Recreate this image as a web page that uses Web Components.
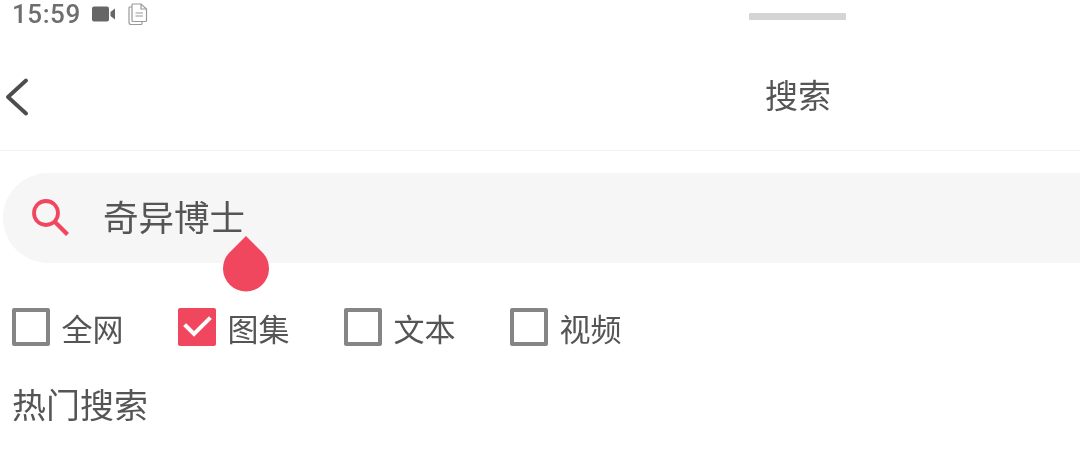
<!DOCTYPE html>
<html lang="zh-CN"><head><meta charset="utf-8"><title>搜索</title>
<style>
html,body{margin:0;padding:0;width:1080px;height:449px;overflow:hidden;background:#fff}
</style></head><body>
<search-app></search-app>
<script>
const F='"Noto Sans CJK SC","Noto Sans",sans-serif';
function def(name,css,html){
  customElements.define(name,class extends HTMLElement{
    constructor(){super();this.attachShadow({mode:'open'}).innerHTML='<style>'+css+'</style>'+html;}
  });
}
def('status-bar',`
:host{display:grid;grid-template-columns:1fr auto 234px;align-items:start;height:41px;color:#6e6e6e}
.l{display:flex;align-items:center;gap:11px;padding-left:12px;height:28px}
time{font:500 26px/26px Roboto,sans-serif;letter-spacing:.55px;margin-top:1px;margin-bottom:1px}
.h{width:97px;height:7px;margin-top:13px;background:#d4d4d4;border-radius:1px}
svg{display:block}`,`
<div class="l"><time>15:59</time>
<svg width="24" height="16" viewBox="0 0 24 16"><rect x="0" y="0.5" width="17" height="15" rx="2" fill="#666"/><path d="M18.500 6 L23 2.500 V13.500 L18.500 10Z" fill="#666"/></svg>
<svg style="margin-left:1px" width="20" height="22" viewBox="0 0 20 22" fill="none" stroke="#9a9a9a" stroke-width="1.200"><path d="M5 1h8l5.500 5v11.500a1 1 0 0 1-1 1H5a1 1 0 0 1-1-1V2a1 1 0 0 1 1-1z" fill="#fff"/><path d="M13 1v5h5.500"/><path d="M7.500 10h7.500M7.500 13h7.500"/><path d="M4 4H2a1 1 0 0 0-1 1v14.500a2 2 0 0 0 2 2h10a1 1 0 0 0 1-1v-2"/></svg></div>
<div class="h"></div><div></div>`);
def('app-header',`
:host{display:grid;grid-template-columns:1fr auto 249px;align-items:center;height:110px;padding-top:2px;box-sizing:border-box;border-bottom:1px solid #f1f1f1;color:#555;font:400 33px/1 ${F}}
svg{display:block;margin-left:5px}
span{padding-bottom:4px}`,`
<svg width="24" height="38" viewBox="0 0 24 38" fill="none" stroke="#4d4d4d" stroke-width="3.800" stroke-linecap="round" stroke-linejoin="round"><path d="M21 2.500 L3 19 L21 35.500"/></svg>
<span><slot></slot></span><div></div>`);
def('search-box',`
:host{display:flex;align-items:center;position:relative;height:90px;margin:22px 0 0 3px;padding-left:29px;background:#f6f6f6;border-radius:45px 0 0 45px;color:#555;font:400 35.500px/1 ${F}}
svg.i{display:block;flex:none}
span{margin-left:33px;padding-bottom:5px}
svg.d{position:absolute;left:219px;top:63px}`,`
<svg class="i" width="38" height="38" viewBox="0 0 38 38" fill="none" stroke="#f0475f" stroke-width="3.800"><circle cx="14" cy="14" r="12"/><path d="M22.500 22.500 L35.500 35.500" stroke-width="4.200"/></svg>
<span><slot></slot></span>
<svg class="d" width="48" height="56" viewBox="0 0 48 56"><path d="M24 0 L7 17 A23 23 0 1 0 41 17Z" fill="#f0475f"/></svg>`);
def('check-item',`
:host{display:flex;align-items:center;width:166px;color:#555;font:400 31px/1 ${F}}
.b{box-sizing:border-box;width:38px;height:38px;border:4px solid #858585;border-radius:2px;margin-right:11.500px;flex:none}
:host([checked]) .b{background:#f0475f;border:0;display:flex;align-items:center;justify-content:center}
svg{display:none}
:host([checked]) svg{display:block}`,`
<div class="b"><svg width="32" height="26" viewBox="0 0 32 26" fill="none" stroke="#fff" stroke-width="4" stroke-linecap="square"><path d="M5 12 L13 20 L28 5"/></svg></div>
<span><slot></slot></span>`);
def('check-row',`:host{display:flex;margin:45px 0 0 12px}`,`<slot></slot>`);
def('section-title',`:host{display:block;margin:39px 0 0 12px;color:#555;font:400 34px/1.1 ${F}}`,`<slot></slot>`);
def('search-app',`:host{display:block;width:1080px;height:449px;overflow:hidden;font-family:${F};filter:blur(.5px)}`,`
<status-bar></status-bar>
<app-header>搜索</app-header>
<search-box>奇异博士</search-box>
<check-row><check-item>全网</check-item><check-item checked>图集</check-item><check-item>文本</check-item><check-item>视频</check-item></check-row>
<section-title>热门搜索</section-title>`);
</script></body></html>
